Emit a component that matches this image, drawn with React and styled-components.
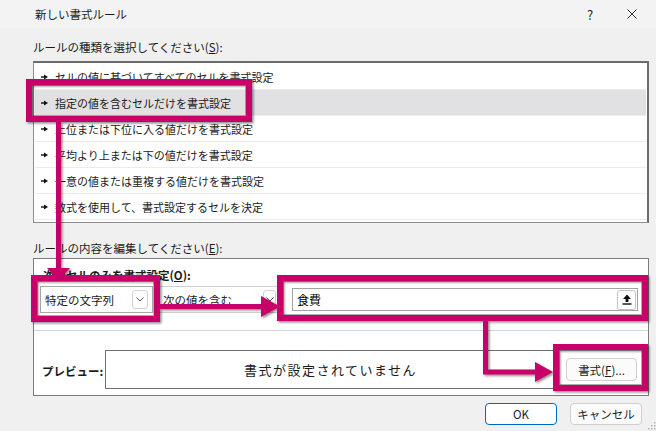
import React from 'react'
import styled, { createGlobalStyle } from 'styled-components'

const GlobalStyle = createGlobalStyle`
  html, body { margin: 0; padding: 0; }
  body {
    background: #f0f0f0;
    font-family: "Noto Sans CJK JP", "Noto Sans", sans-serif;
    color: #1b1b1b;
  }
`;

const MAGENTA = '#c8006a';

const Dialog = styled.div`
  position: relative;
  width: 656px;
  height: 431px;
  overflow: hidden;
  background: #f0f0f0;
`;

const TitleBar = styled.div`
  height: 28px;
  display: flex;
  align-items: center;
  padding-left: 35px;
  padding-right: 3px;
  font-size: 11.5px;
  background: #f3f3f3;
`;

const TitleText = styled.span`
  flex: 1;
`;

const TitleButton = styled.span`
  width: 42px;
  display: flex;
  justify-content: center;
  align-items: center;
  font-size: 13px;
  color: #222;
`;

const Body = styled.div`
  padding: 0 7px 0 33px;
`;

const SectionLabel = styled.div`
  padding-top: ${p => p.$top}px;
  padding-bottom: ${p => p.$bottom}px;
  line-height: 20px;
  font-size: 11.5px;
`;

const RuleList = styled.div`
  height: 162px;
  box-sizing: border-box;
  background: #fff;
  border: 1px solid #8d8d8d;
  border-top: 2px solid #6b6b6b;
  border-right: 2px solid #6b6b6b;
  padding: 1px 1px 0 1px;
`;

const RuleRow = styled.div`
  height: 26px;
  box-sizing: border-box;
  display: flex;
  align-items: center;
  gap: 7px;
  padding-left: 6px;
  font-size: 11px;
  border-bottom: 1px solid #ececec;
  background: ${p => (p.$selected ? '#e1e1e3' : '#fff')};
`;

const EditBox = styled.div`
  height: 138px;
  box-sizing: border-box;
  border: 1px solid #7a7a7a;
  background: #fff;
  display: flex;
  flex-direction: column;
`;

const ConditionArea = styled.div`
  height: 72px;
  box-sizing: border-box;
  padding: 7px 10px 0 6px;
  border-bottom: 1px solid #d4d4d4;
`;

const ConditionTitle = styled.div`
  padding-left: 3px;
  line-height: 18px;
  font-size: 11.5px;
  font-weight: bold;
`;

const ControlRow = styled.div`
  margin-top: 2px;
  height: 27px;
  display: flex;
  align-items: center;
`;

const Combo = styled.div`
  width: ${p => p.$width}px;
  height: 27px;
  margin-left: ${p => p.$gap || 0}px;
  box-sizing: border-box;
  border: 1px solid ${p => p.$border};
  background: #fff;
  display: flex;
  align-items: center;
  padding-left: ${p => p.$pad}px;
  font-size: 11.5px;
`;

const ComboText = styled.span`
  flex: 1;
`;

const DropButton = styled.span`
  width: ${p => p.$w}px;
  height: 19px;
  margin-right: ${p => p.$mr}px;
  box-sizing: border-box;
  border: 1px solid #d2d2d2;
  border-radius: 3px;
  display: flex;
  align-items: center;
  justify-content: center;
  background: #fdfdfd;
`;

const TextBox = styled.div`
  flex: 1;
  margin-left: 14px;
  height: 23px;
  box-sizing: border-box;
  border: 1px solid #a2a2a2;
  display: flex;
  align-items: center;
  padding-left: 4px;
  font-size: 12px;
  color: #000;
`;

const UploadButton = styled.span`
  width: 19px;
  height: 20px;
  margin-right: 1px;
  box-sizing: border-box;
  border: 1px solid #c4c4c4;
  border-radius: 3px;
  display: flex;
  align-items: center;
  justify-content: center;
`;

const PreviewArea = styled.div`
  flex: 1;
  padding: 19px 11px 0 8px;
  display: flex;
  align-items: flex-start;
`;

const PreviewRow = styled.div`
  height: 39px;
  flex: 1;
  display: flex;
  align-items: center;
`;

const PreviewLabel = styled.span`
  width: 63px;
  font-size: 11.5px;
  font-weight: bold;
  padding-top: 2px;
`;

const PreviewBox = styled.div`
  width: 451px;
  height: 39px;
  box-sizing: border-box;
  border: 1px solid #707070;
  display: flex;
  align-items: center;
  justify-content: center;
  font-size: 13px;
  letter-spacing: 1.5px;
`;

const Button = styled.div`
  width: ${p => p.$w}px;
  height: ${p => p.$h}px;
  margin-left: ${p => p.$ml || 0}px;
  box-sizing: border-box;
  border: 1px solid ${p => (p.$primary ? '#0067c0' : '#d0d0d0')};
  border-radius: 4px;
  background: ${p => (p.$primary ? '#fff' : '#fbfbfb')};
  display: flex;
  align-items: center;
  justify-content: center;
  font-size: 11.5px;
`;

const Footer = styled.div`
  display: flex;
  justify-content: flex-end;
  gap: 13px;
  padding: 7px 7px 0 0;
`;

const Overlay = styled.svg`
  position: absolute;
  left: 0;
  top: 0;
  pointer-events: none;
`;

const Marker = () => (
  <svg width="7" height="6" viewBox="0 0 7 6">
    <rect x="0" y="2.3" width="3.5" height="1.4" fill="#111" />
    <polygon points="3,0.5 7,3 3,5.5" fill="#111" />
  </svg>
);

const Chevron = () => (
  <svg width="8" height="5" viewBox="0 0 8 5">
    <polyline points="0.5,0.5 4,4 7.5,0.5" fill="none" stroke="#555" strokeWidth="1" />
  </svg>
);

const rules = [
  'セルの値に基づいてすべてのセルを書式設定',
  '指定の値を含むセルだけを書式設定',
  '上位または下位に入る値だけを書式設定',
  '平均より上または下の値だけを書式設定',
  '一意の値または重複する値だけを書式設定',
  '数式を使用して、書式設定するセルを決定',
];

const boxes = [
  [26, 79, 226, 43],
  [31, 275, 129, 47],
  [277, 275, 371, 46],
  [553, 344, 95, 47],
];

const Annotations = () => (
  <Overlay width="656" height="431" viewBox="0 0 656 431">
    <defs>
      <filter id="sh" x="-10%" y="-10%" width="130%" height="130%">
        <feDropShadow dx="1.5" dy="1.5" stdDeviation="1" floodColor="#000" floodOpacity="0.45" />
      </filter>
    </defs>
    <g filter="url(#sh)">
      <line x1="58.5" y1="122" x2="58.5" y2="269" stroke={MAGENTA} strokeWidth="5" />
      <polygon points="47,268 70,268 58.5,281" fill={MAGENTA} />
      <line x1="160" y1="306.5" x2="264" y2="306.5" stroke={MAGENTA} strokeWidth="5" />
      <polygon points="261,296 261,317 280,306.5" fill={MAGENTA} />
      <path d="M485.5 321 V372 H537" fill="none" stroke={MAGENTA} strokeWidth="5" />
      <polygon points="535,362 535,382 553,372" fill={MAGENTA} />
      {boxes.map(([x, y, w, h], i) => (
        <rect key={i} x={x + 3} y={y + 3} width={w - 6} height={h - 6} fill="none" stroke={MAGENTA} strokeWidth="6" />
      ))}
    </g>
    {boxes.map(([x, y, w, h], i) => (
      <rect key={i} x={x + 6.5} y={y + 6.5} width={w - 13} height={h - 13} fill="none" stroke="rgba(0,0,0,0.3)" strokeWidth="1" />
    ))}
    <g fill="#b5b5b5">
      <rect x="651" y="425" width="1.5" height="1.5" />
      <rect x="648" y="428" width="1.5" height="1.5" />
      <rect x="651" y="428" width="1.5" height="1.5" />
      <rect x="654" y="422" width="1.5" height="1.5" />
      <rect x="654" y="425" width="1.5" height="1.5" />
      <rect x="654" y="428" width="1.5" height="1.5" />
    </g>
  </Overlay>
);

const App = () => {
  return (
    <Dialog>
      <GlobalStyle />
      <TitleBar>
        <TitleText>新しい書式ルール</TitleText>
        <TitleButton>?</TitleButton>
        <TitleButton>
          <svg width="10" height="10" viewBox="0 0 10 10">
            <path d="M0.5 0.5 L9.5 9.5 M9.5 0.5 L0.5 9.5" stroke="#333" strokeWidth="1" />
          </svg>
        </TitleButton>
      </TitleBar>
      <Body>
        <SectionLabel $top={9} $bottom={4}>
          ルールの種類を選択してください(<u>S</u>):
        </SectionLabel>
        <RuleList>
          {rules.map((r, i) => (
            <RuleRow key={r} $selected={i === 1}>
              <Marker />
              <span>{r}</span>
            </RuleRow>
          ))}
        </RuleList>
        <SectionLabel $top={15} $bottom={0}>
          ルールの内容を編集してください(<u>E</u>):
        </SectionLabel>
        <EditBox>
          <ConditionArea>
            <ConditionTitle>
              次のセルのみを書式設定(<u>O</u>):
            </ConditionTitle>
            <ControlRow>
              <Combo $width={113} $pad={4} $border="#a8a8a8">
                <ComboText>特定の文字列</ComboText>
                <DropButton $w={16} $mr={4}>
                  <Chevron />
                </DropButton>
              </Combo>
              <Combo $width={121} $pad={5} $gap={4} $border="#d0d0d0">
                <ComboText>次の値を含む</ComboText>
                <DropButton $w={13} $mr={1}>
                  <Chevron />
                </DropButton>
              </Combo>
              <TextBox>
                <ComboText>食費</ComboText>
                <UploadButton>
                  <svg width="10" height="11" viewBox="0 0 10 11">
                    <path d="M5 0.5 L1 5 H3.6 V8 H6.4 V5 H9 Z" fill="#111" />
                    <rect x="0.5" y="9.3" width="9" height="1.4" fill="#111" />
                  </svg>
                </UploadButton>
              </TextBox>
            </ControlRow>
          </ConditionArea>
          <PreviewArea>
            <PreviewRow>
              <PreviewLabel>プレビュー:</PreviewLabel>
              <PreviewBox>書式が設定されていません</PreviewBox>
              <Button $w={71} $h={23} $ml={10}>
                書式(<u>F</u>)...
              </Button>
            </PreviewRow>
          </PreviewArea>
        </EditBox>
        <Footer>
          <Button $w={72} $h={22} $primary>
            OK
          </Button>
          <Button $w={72} $h={22}>
            キャンセル
          </Button>
        </Footer>
      </Body>
      <Annotations />
    </Dialog>
  )
}

export default App
